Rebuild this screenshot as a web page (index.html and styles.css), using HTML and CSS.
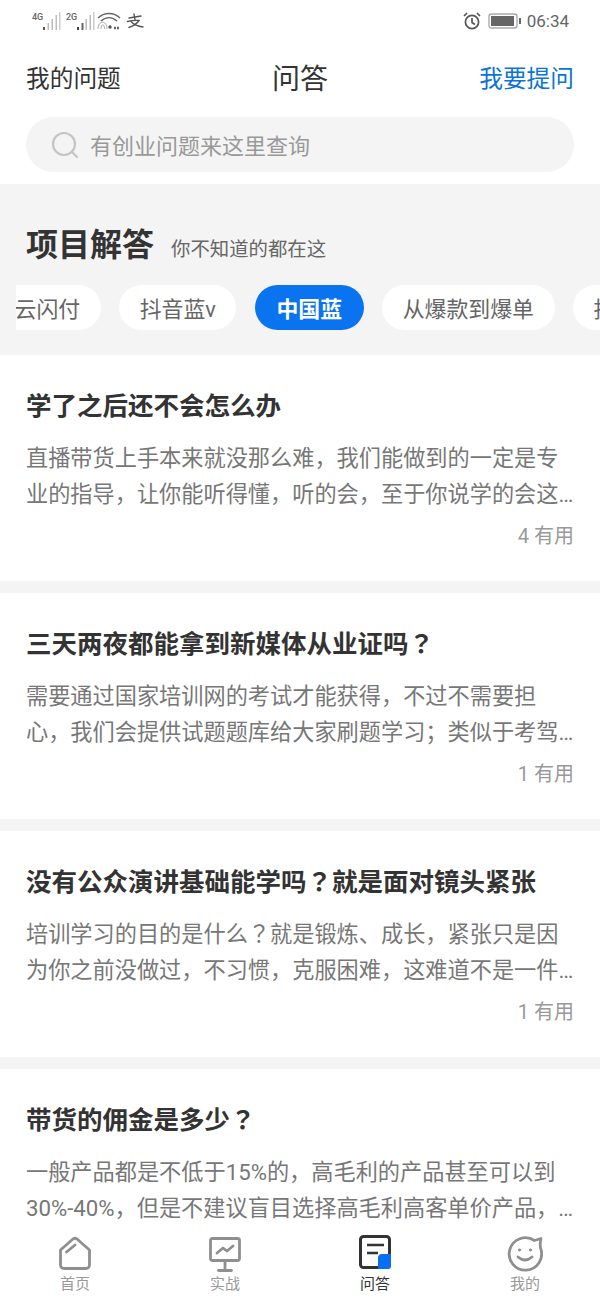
FILE: index.html
```html
<!DOCTYPE html>
<html lang="zh-CN">
    <head>
        <meta charset="UTF-8">
        <meta name="viewport" content="width=device-width, initial-scale=1.0">
        <title>问答</title>
        <link rel="stylesheet" href="styles.css">
    </head>
    <body>
        <div class="clApp">
            <!-- barra de status -->
            <div class="clStatus">
                <div class="clStatusLeft">
                    <span class="clSignal">
                        <span class="clNet">4G</span>
                        <svg width="18" height="18" viewBox="0 0 18 18"><rect x="0" y="15" width="2" height="3" fill="#555"/><rect x="4.5" y="11" width="1.5" height="7" fill="#bbb"/><rect x="8.5" y="7" width="1.5" height="11" fill="#bbb"/><rect x="12.5" y="3" width="1.5" height="15" fill="#bbb"/><rect x="16" y="0" width="1.5" height="18" fill="#ccc"/></svg>
                    </span>
                    <span class="clSignal">
                        <span class="clNet">2G</span>
                        <svg width="18" height="18" viewBox="0 0 18 18"><rect x="0" y="15" width="2" height="3" fill="#444"/><rect x="4.5" y="11" width="2" height="7" fill="#666"/><rect x="8.5" y="7" width="1.5" height="11" fill="#bbb"/><rect x="12.5" y="3" width="1.5" height="15" fill="#bbb"/><rect x="16" y="0" width="1.5" height="18" fill="#ccc"/></svg>
                    </span>
                    <svg class="clWifi" width="24" height="18" viewBox="0 0 24 18" fill="none" stroke="#666" stroke-width="1.5"><path d="M1 6C7 0 17 0 23 6"/><path d="M4 9C9 4.5 15 4.5 20 9"/><path d="M1 17C1 8 10 8 10 17" stroke="#aaa" stroke-width="1"/><path d="M4 17C4 11.5 7.5 11.5 7.5 17" stroke="#aaa" stroke-width="1"/><circle cx="13" cy="15" r="1.7" fill="#555" stroke="none"/><path d="M17 16h6" stroke-width="2.5" stroke-dasharray="2 1"/></svg>
                    <svg class="clPay" width="18" height="16" viewBox="0 0 18 16" fill="none" stroke="#555" stroke-width="1.4" stroke-linecap="round"><path d="M3 5L15 3"/><path d="M8 1L9 7"/><path d="M1.5 8.5Q8 7 13 7.5Q10 12 3 14.5"/><path d="M5 8.5Q9 13 17 14"/></svg>
                </div>
                <div class="clStatusRight">
                    <svg class="clAlarme" width="20" height="20" viewBox="0 0 20 20" fill="none" stroke="#555" stroke-width="1.7"><circle cx="10" cy="11" r="6.6"/><path d="M10 7v4.5l3 2"/><path d="M2 5l3-3M18 5l-3-3"/></svg>
                    <svg width="34" height="18" viewBox="0 0 34 18"><rect x="1" y="2" width="28" height="14" rx="2.5" fill="none" stroke="#aaa" stroke-width="1.4"/><rect x="3" y="4" width="23" height="10" fill="#666"/><rect x="31" y="6" width="2" height="6" fill="#666"/></svg>
                    <span class="clTime">06:34</span>
                </div>
            </div>

            <!-- topo -->
            <div class="clTopo">
                <span class="clTopoLink">我的问题</span>
                <span class="clTopoTitulo">问答</span>
                <span class="clTopoLink clAzul">我要提问</span>
            </div>
            <div class="clBusca">
                <svg width="30" height="30" viewBox="0 0 30 30" fill="none" stroke="#c4c4c4" stroke-width="2.2"><circle cx="14" cy="14" r="11"/><path d="M22 22l5 5" stroke-linecap="round"/></svg>
                <span>有创业问题来这里查询</span>
            </div>

            <!-- projetos -->
            <div class="clProjetos">
                <div class="clProjetosTopo">
                    <h2>项目解答</h2>
                    <span>你不知道的都在这</span>
                </div>
                <div class="clPills">
                    <span class="clPill clPillPrimeira">云闪付</span>
                    <span class="clPill">抖音蓝v</span>
                    <span class="clPill clPillAtiva">中国蓝</span>
                    <span class="clPill">从爆款到爆单</span>
                    <span class="clPill">投放</span>
                </div>
            </div>

            <!-- lista -->
            <div class="clLista">
                <div class="clCard">
                    <h3>学了之后还不会怎么办</h3>
                    <p>直播带货上手本来就没那么难，我们能做到的一定是专业的指导，让你能听得懂，听的会，至于你说学的会这个问题，还是要看你自己是否愿意去练习</p>
                    <div class="clUtil">4 有用</div>
                </div>
                <div class="clCard">
                    <h3>三天两夜都能拿到新媒体从业证吗<span class="clInt" lang="zh-Hant">？</span></h3>
                    <p>需要通过国家培训网的考试才能获得，不过不需要担心，我们会提供试题题库给大家刷题学习；类似于考驾照的科目一，只要认真练习就能通过考试</p>
                    <div class="clUtil">1 有用</div>
                </div>
                <div class="clCard">
                    <h3>没有公众演讲基础能学吗<span class="clInt" lang="zh-Hant">？</span>就是面对镜头紧张</h3>
                    <p>培训学习的目的是什么<span class="clInt" lang="zh-Hant">？</span>就是锻炼、成长，紧张只是因为你之前没做过，不习惯，克服困难，这难道不是一件很有成就感的事情吗，多练习就好了</p>
                    <div class="clUtil">1 有用</div>
                </div>
                <div class="clCard">
                    <h3>带货的佣金是多少<span class="clInt" lang="zh-Hant">？</span></h3>
                    <p>一般产品都是不低于15%的，高毛利的产品甚至可以到30%-40%，但是不建议盲目选择高毛利高客单价产品，要结合自己的粉丝情况来选择合适的商品</p>
                </div>
            </div>

            <!-- menu inferior -->
            <div class="clTabs">
                <div class="clTab">
                    <svg width="36" height="38" viewBox="0 0 36 38" fill="none" stroke="#8f8f8f" stroke-width="2.8" stroke-linejoin="round" stroke-linecap="round"><path d="M3.5 16L16 5q2-1.6 4 0L32.5 16V30.5q0 4-4 4H7.5q-4 0-4-4z"/><path d="M9.5 18l8.5-7"/></svg>
                    <span>首页</span>
                </div>
                <div class="clTab">
                    <svg width="36" height="38" viewBox="0 0 36 38" fill="none" stroke="#8f8f8f" stroke-width="2.8" stroke-linejoin="round" stroke-linecap="round"><rect x="3.5" y="4.5" width="29" height="22" rx="2"/><path d="M10 19l6-5 4 3 6-5"/><path d="M18 27v9M11.5 36.5h13"/></svg>
                    <span>实战</span>
                </div>
                <div class="clTab clTabAtiva">
                    <svg width="36" height="38" viewBox="0 0 36 38" fill="none"><rect x="3.5" y="2.5" width="29" height="31" rx="3" stroke="#333" stroke-width="3"/><path d="M10 11h17M10 19h11" stroke="#333" stroke-width="2.6"/><path d="M21 35V24q0-4 4-4H34V32q0 3-3 3z" fill="#0a6ef0"/></svg>
                    <span>问答</span>
                </div>
                <div class="clTab">
                    <svg width="36" height="38" viewBox="0 0 36 38" fill="none" stroke="#8f8f8f" stroke-width="2.8" stroke-linecap="round" stroke-linejoin="round"><path d="M27.5 6.5A16.2 16.2 0 1 0 33.5 14q-.8-4 .5-9.5z"/><path d="M11 23q7 6 14 0"/><circle cx="12.5" cy="16" r="1.1" fill="#8f8f8f" stroke-width="1"/><circle cx="23.5" cy="16" r="1.1" fill="#8f8f8f" stroke-width="1"/></svg>
                    <span>我的</span>
                </div>
            </div>
        </div>
    </body>
</html>
```

FILE: styles.css
```css
*{
    margin: 0px;
    padding: 0px;
    box-sizing: border-box;
}
body{
    background: white;
    font-family: "Roboto", "Noto Sans CJK SC", sans-serif;
    overflow: hidden;
}
.clApp{
    width: 600px;
    height: 1300px;
    display: flex;
    flex-direction: column;
    overflow: hidden;
}
/* ponto de interrogacao centrado */
.clInt{
    font-family: "Noto Sans CJK TC", sans-serif;
    line-height: 0;
}

/* status */
.clStatus{
    height: 45px;
    flex: none;
    padding: 0px 31px 3px 32px;
    display: flex;
    justify-content: space-between;
    align-items: center;
}
.clStatusLeft, .clStatusRight{
    display: flex;
    align-items: center;
}
.clStatusLeft{
    gap: 3px;
}
.clStatusRight{
    gap: 5px;
}
.clSignal{
    display: flex;
    align-items: flex-start;
    width: 31px;
}
.clNet{
    font-size: 9px;
    font-weight: 500;
    color: #666;
    line-height: 11px;
    width: 10.5px;
}
.clWifi{
    margin-left: -3px;
}
.clPay{
    margin-left: 2px;
}
.clAlarme{
    margin-right: 1px;
}
.clTime{
    font-size: 17px;
    color: #666;
}

/* topo */
.clTopo{
    height: 64px;
    flex: none;
    padding: 0px 26px;
    display: flex;
    justify-content: space-between;
    align-items: center;
}
.clTopoLink{
    font-size: 23.7px;
    color: #333;
}
.clAzul{
    color: #0b74d8;
}
.clTopoTitulo{
    font-size: 28px;
    color: #333;
}
.clBusca{
    height: 55px;
    flex: none;
    margin: 8px 26px 12px 26px;
    padding-left: 24px;
    border-radius: 28px;
    background: #f4f4f4;
    display: flex;
    align-items: center;
    gap: 10px;
    font-size: 22px;
    color: #999;
}
.clBusca span{
    margin-bottom: 2px;
}

/* projetos */
.clProjetos{
    height: 171px;
    flex: none;
    background: #f4f4f4;
    padding-top: 36px;
}
.clProjetosTopo{
    height: 44px;
    padding-left: 26px;
    display: flex;
    align-items: center;
    gap: 17px;
}
.clProjetosTopo h2{
    font-size: 32px;
    font-weight: 700;
    color: #333;
}
.clProjetosTopo span{
    font-size: 19.4px;
    color: #666;
    margin-top: 10px;
}
.clPills{
    margin: 21px 0px 0px 16px;
    display: flex;
    gap: 18.5px;
    overflow: hidden;
}
.clPill{
    height: 45px;
    flex: none;
    padding: 0px 20.5px;
    border-radius: 23px;
    background: white;
    display: flex;
    align-items: center;
    font-size: 21.9px;
    color: #666;
}
.clPillPrimeira{
    margin-left: -22px;
}
.clPillAtiva{
    padding: 0px 21.5px;
    background: #0a73f0;
    color: white;
    font-weight: 700;
}

/* lista */
.clLista{
    flex: 1;
    min-height: 0;
    overflow: hidden;
    background: #f4f4f4;
}
.clCard{
    height: 226px;
    margin-bottom: 12px;
    padding: 31px 26px 0px 26px;
    background: white;
}
.clCard h3{
    font-size: 25.5px;
    font-weight: 700;
    line-height: 40px;
    color: #333;
}
.clCard p{
    margin-top: 14px;
    font-size: 22.2px;
    line-height: 36px;
    color: #777;
    display: -webkit-box;
    -webkit-box-orient: vertical;
    -webkit-line-clamp: 2;
    overflow: hidden;
}
.clUtil{
    margin-top: 9px;
    text-align: right;
    font-size: 20px;
    line-height: 30px;
    color: #999;
}

/* menu inferior */
.clTabs{
    height: 75px;
    flex: none;
    background: white;
    display: grid;
    grid-template-columns: repeat(4, 150px);
}
.clTab{
    display: flex;
    flex-direction: column;
    align-items: center;
    padding-top: 9px;
    font-size: 15px;
    line-height: 22px;
    color: #999;
}
.clTab span{
    margin-top: 1px;
}
.clTabAtiva{
    color: #333;
}
```
